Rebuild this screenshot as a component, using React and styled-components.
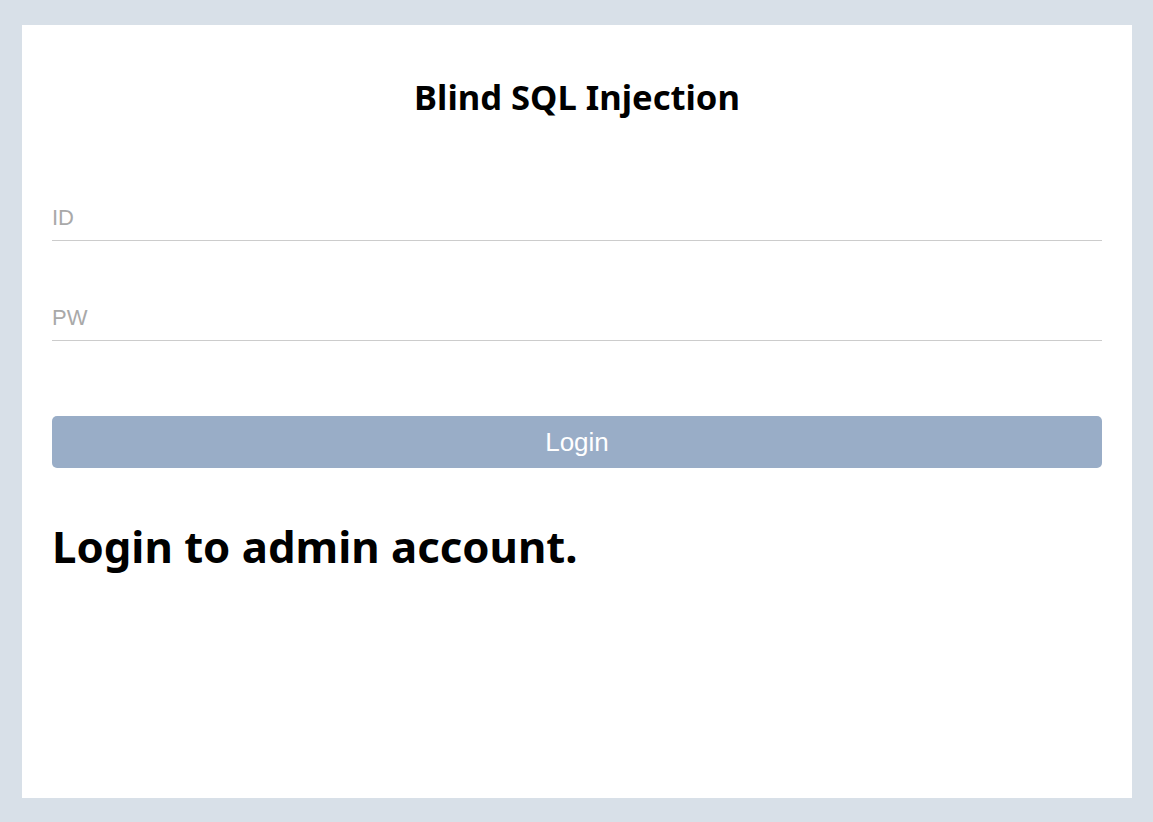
import React from "react";
import styled, { createGlobalStyle } from "styled-components";

const GlobalStyle = createGlobalStyle`
  html, body {
    margin: 0;
    padding: 0;
    background: #d8e0e8;
  }
  body {
    font-family: "Noto Sans", "Noto Sans CJK KR", sans-serif;
  }
`;

const Page = styled.div`
  box-sizing: border-box;
  width: 1153px;
  height: 822px;
  padding: 25px 21px 24px 22px;
`;

const Card = styled.div`
  box-sizing: border-box;
  height: 100%;
  background: #fff;
  padding: 30px 30px;
`;

const Title = styled.h2`
  margin: 0;
  padding-top: 20px;
  text-align: center;
  font-size: 34.6px;
  font-weight: 700;
  line-height: 44px;
  color: #000;
`;

const Form = styled.form`
  display: flex;
  flex-direction: column;
  margin-top: 76px;
`;

const Field = styled.input`
  box-sizing: border-box;
  width: 100%;
  height: 46px;
  margin-bottom: 54px;
  padding: 0;
  border: none;
  border-bottom: 1px solid #cccccc;
  outline: none;
  font-family: "Liberation Sans", Arial, sans-serif;
  font-size: 22px;
  color: #333;
  background: transparent;

  &::placeholder {
    color: #a9a9a9;
  }

  &:last-of-type {
    margin-bottom: 75px;
  }
`;

const Button = styled.button`
  height: 52px;
  border: none;
  border-radius: 5px;
  background: #99adc7;
  color: #fff;
  font-family: "Liberation Sans", Arial, sans-serif;
  font-size: 26px;
  cursor: pointer;
`;

const Result = styled.h1`
  margin: 46px 0 0;
  font-size: 43.7px;
  font-weight: 700;
  line-height: 64px;
  color: #000;
`;

export default function App() {
  return (
    <>
      <GlobalStyle />
      <Page>
        <Card>
          <Title>Blind SQL Injection</Title>
          <Form onSubmit={(e) => e.preventDefault()}>
            <Field type="text" placeholder="ID" />
            <Field type="password" placeholder="PW" />
            <Button type="submit">Login</Button>
          </Form>
          <Result>Login to admin account.</Result>
        </Card>
      </Page>
    </>
  );
}
